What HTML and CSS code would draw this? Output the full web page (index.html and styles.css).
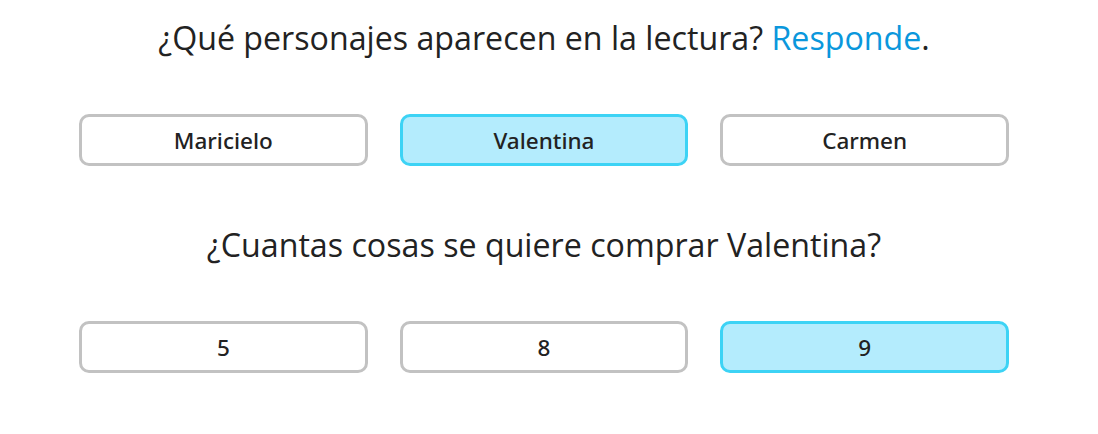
FILE: index.html
```html
<!DOCTYPE html>
<html lang="es">
<head>
<meta charset="utf-8">
<link rel="stylesheet" href="styles.css">
</head>
<body>
<main class="quiz">
  <section class="question">
    <h2 class="prompt">¿Qué personajes aparecen en la lectura? <span class="accent">Responde</span>.</h2>
    <div class="options">
      <button class="option">Maricielo</button>
      <button class="option selected">Valentina</button>
      <button class="option">Carmen</button>
    </div>
  </section>
  <section class="question">
    <h2 class="prompt">¿Cuantas cosas se quiere comprar Valentina?</h2>
    <div class="options">
      <button class="option">5</button>
      <button class="option">8</button>
      <button class="option selected">9</button>
    </div>
  </section>
</main>
</body>
</html>
```
FILE: styles.css
```css
html, body {
  margin: 0;
  padding: 0;
  background: #ffffff;
}
body {
  font-family: "Open Sans", "Noto Sans", sans-serif;
  color: #222222;
}
.quiz {
  width: 930px;
  margin-left: 79px;
  padding-top: 16px;
}
.question {
  display: flex;
  flex-direction: column;
}
.prompt {
  margin: 0;
  font-weight: 400;
  font-size: 32.2px;
  line-height: 44px;
  text-align: center;
  color: #222222;
}
.accent {
  color: #0a97dc;
}
.options {
  display: grid;
  grid-template-columns: repeat(3, 1fr);
  gap: 32px;
  margin-top: 54px;
  margin-bottom: 57px;
}
.option {
  height: 52px;
  border: 3px solid #c2c2c2;
  border-radius: 10px;
  background: #ffffff;
  font-family: "Noto Sans", "Open Sans", sans-serif;
  font-size: 22.5px;
  font-weight: 500;
  color: #222222;
  padding: 0;
}
.option.selected {
  background: #b4ecfd;
  border-color: #3dd3f5;
}
```
